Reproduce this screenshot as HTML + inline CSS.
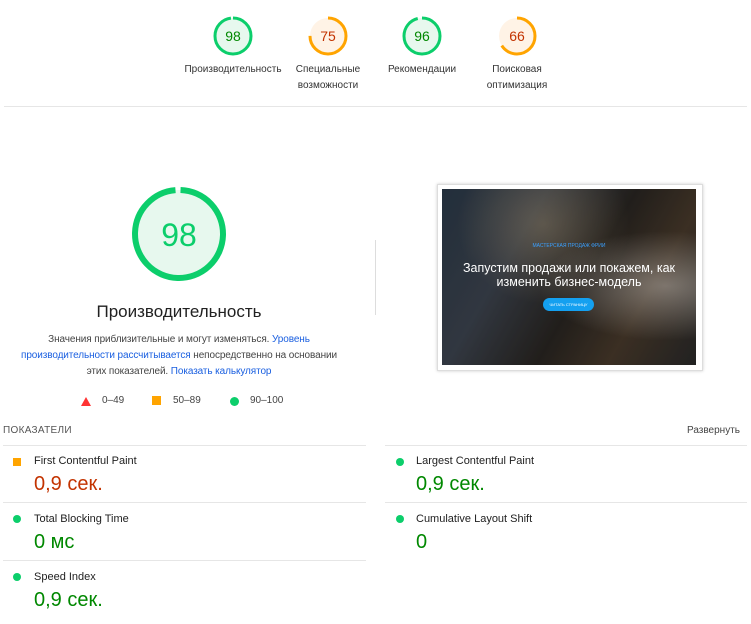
<!DOCTYPE html>
<html><head><meta charset="utf-8"><style>
body{margin:0;width:751px;height:624px;background:#fff;font-family:"Liberation Sans","Noto Sans CJK JP",sans-serif;position:relative;overflow:hidden;color:#212121}
.a{position:absolute}
.lbl{position:absolute;width:110px;text-align:center;font-size:10px;line-height:16px;color:#333}
.hr{position:absolute;height:1px;background:#e6e6e6}
.mn{position:absolute;font-size:12px;color:#212121}
.mv{position:absolute;font-size:20px}
.dot{position:absolute;width:9px;height:9px;border-radius:50%;background:#0cce6b}
</style></head><body>
<svg class="a" style="left:0;top:0" width="751" height="110">
<g font-family="Liberation Sans" font-size="14" text-anchor="middle">
<circle cx="233" cy="36" r="18" fill="#e7f8ee" stroke="#0cce6b" stroke-width="3" stroke-dasharray="110.8 113.1" transform="rotate(-90 233 36)"/>
<text x="233" y="41" fill="#008800">98</text>
<circle cx="328" cy="36" r="18" fill="#fff3e6" stroke="#ffa400" stroke-width="3" stroke-dasharray="84.8 113.1" transform="rotate(-90 328 36)"/>
<text x="328" y="41" fill="#c33300">75</text>
<circle cx="422" cy="36" r="18" fill="#e7f8ee" stroke="#0cce6b" stroke-width="3" stroke-dasharray="108.6 113.1" transform="rotate(-90 422 36)"/>
<text x="422" y="41" fill="#008800">96</text>
<circle cx="517" cy="36" r="18" fill="#fff3e6" stroke="#ffa400" stroke-width="3" stroke-dasharray="74.6 113.1" transform="rotate(-90 517 36)"/>
<text x="517" y="41" fill="#c33300">66</text>
</g></svg>
<div class="lbl" style="left:178px;top:62px">Производительность</div>
<div class="lbl" style="left:273px;top:62px">Специальные<br>возможности</div>
<div class="lbl" style="left:367px;top:62px">Рекомендации</div>
<div class="lbl" style="left:462px;top:62px">Поисковая<br>оптимизация</div>
<div class="hr" style="left:4px;top:106px;width:743px"></div>

<svg class="a" style="left:120px;top:175px" width="120" height="120">
<circle cx="59" cy="59" r="44" fill="#e7f8ee" stroke="#0cce6b" stroke-width="6" stroke-dasharray="270.9 276.5" transform="rotate(-88 59 59)"/>
<text x="59" y="71" font-family="Liberation Sans" font-size="32" fill="#0cce6b" text-anchor="middle">98</text>
</svg>
<div class="a" style="left:0;width:358px;top:302px;text-align:center;font-size:17px;color:#212121">Производительность</div>
<div class="a" style="left:10px;width:338px;top:332px;text-align:center;font-size:10px;line-height:16px;color:#444"><span style="letter-spacing:-.1px">Значения приблизительные и могут изменяться. <span style="color:#1a5fe0">Уровень</span><br><span style="color:#1a5fe0">производительности рассчитывается</span> непосредственно на основании<br>этих показателей. <span style="color:#1a5fe0">Показать калькулятор</span></span></div>
<svg class="a" style="left:80px;top:396px" width="12" height="11"><polygon points="6,1 11,10 1,10" fill="#ff3333"/></svg>
<div class="a" style="left:102px;top:395px;font-size:10px;color:#444">0–49</div>
<div class="a" style="left:152px;top:396px;width:9px;height:9px;background:#ffa400"></div>
<div class="a" style="left:173px;top:395px;font-size:10px;color:#444">50–89</div>
<div class="dot" style="left:230px;top:397px"></div>
<div class="a" style="left:250px;top:395px;font-size:10px;color:#444">90–100</div>

<div class="a" style="left:375px;top:240px;width:1px;height:75px;background:#ddd"></div>

<div class="a" style="left:437px;top:184px;width:264px;height:185px;border:1px solid #ddd;box-shadow:0 0 3px #ccc;background:#fff"></div>
<div class="a" style="left:442px;top:189px;width:254px;height:176px;background:linear-gradient(120deg,#2b3a4a 0%,#3e4550 30%,#2a2622 55%,#4a3b2c 75%,#2a2a2a 100%);overflow:hidden">
<div class="a" style="left:0;top:0;width:254px;height:176px;background:radial-gradient(ellipse at 88% 55%,rgba(230,225,220,.4),transparent 40%),radial-gradient(ellipse at 40% 20%,rgba(200,170,120,.3),transparent 40%),rgba(0,0,0,.2)"></div>
<div class="a" style="left:0;width:254px;top:54px;text-align:center;font-size:5px;color:#3aa0ff">МАСТЕРСКАЯ ПРОДАЖ ФРИИ</div>
<div class="a" style="left:0;width:254px;top:72px;text-align:center;font-size:12.5px;line-height:14px;color:#fff">Запустим продажи или покажем, как<br>изменить бизнес-модель</div>
<div class="a" style="left:101px;top:109px;width:51px;height:13px;border-radius:7px;background:#14a0f0;font-size:4px;color:#fff;text-align:center;line-height:13px">ЧИТАТЬ СТРАНИЦУ</div>
</div>

<div class="a" style="left:3px;top:425px;font-size:10px;color:#555;letter-spacing:.3px">ПОКАЗАТЕЛИ</div>
<div class="a" style="right:11px;top:425px;font-size:10px;color:#444">Развернуть</div>
<div class="hr" style="left:3px;top:445px;width:363px"></div>
<div class="hr" style="left:385px;top:445px;width:362px"></div>
<div class="hr" style="left:3px;top:502px;width:363px"></div>
<div class="hr" style="left:385px;top:502px;width:362px"></div>
<div class="hr" style="left:3px;top:560px;width:363px"></div>

<div class="a" style="left:13px;top:458px;width:8px;height:8px;background:#ffa400"></div>
<div class="mn" style="left:34px;top:455px;font-size:11px">First Contentful Paint</div>
<div class="mv" style="left:34px;top:473px;color:#c33300">0,9 сек.</div>
<div class="dot" style="left:13px;top:515px;width:8px;height:8px"></div>
<div class="mn" style="left:34px;top:513px;font-size:11px">Total Blocking Time</div>
<div class="mv" style="left:34px;top:531px;color:#008800">0 мс</div>
<div class="dot" style="left:13px;top:573px;width:8px;height:8px"></div>
<div class="mn" style="left:34px;top:571px;font-size:11px">Speed Index</div>
<div class="mv" style="left:34px;top:589px;color:#008800">0,9 сек.</div>

<div class="dot" style="left:396px;top:458px;width:8px;height:8px"></div>
<div class="mn" style="left:416px;top:455px;font-size:11px">Largest Contentful Paint</div>
<div class="mv" style="left:416px;top:473px;color:#008800">0,9 сек.</div>
<div class="dot" style="left:396px;top:515px;width:8px;height:8px"></div>
<div class="mn" style="left:416px;top:513px;font-size:11px">Cumulative Layout Shift</div>
<div class="mv" style="left:416px;top:531px;color:#008800">0</div>
</body></html>
